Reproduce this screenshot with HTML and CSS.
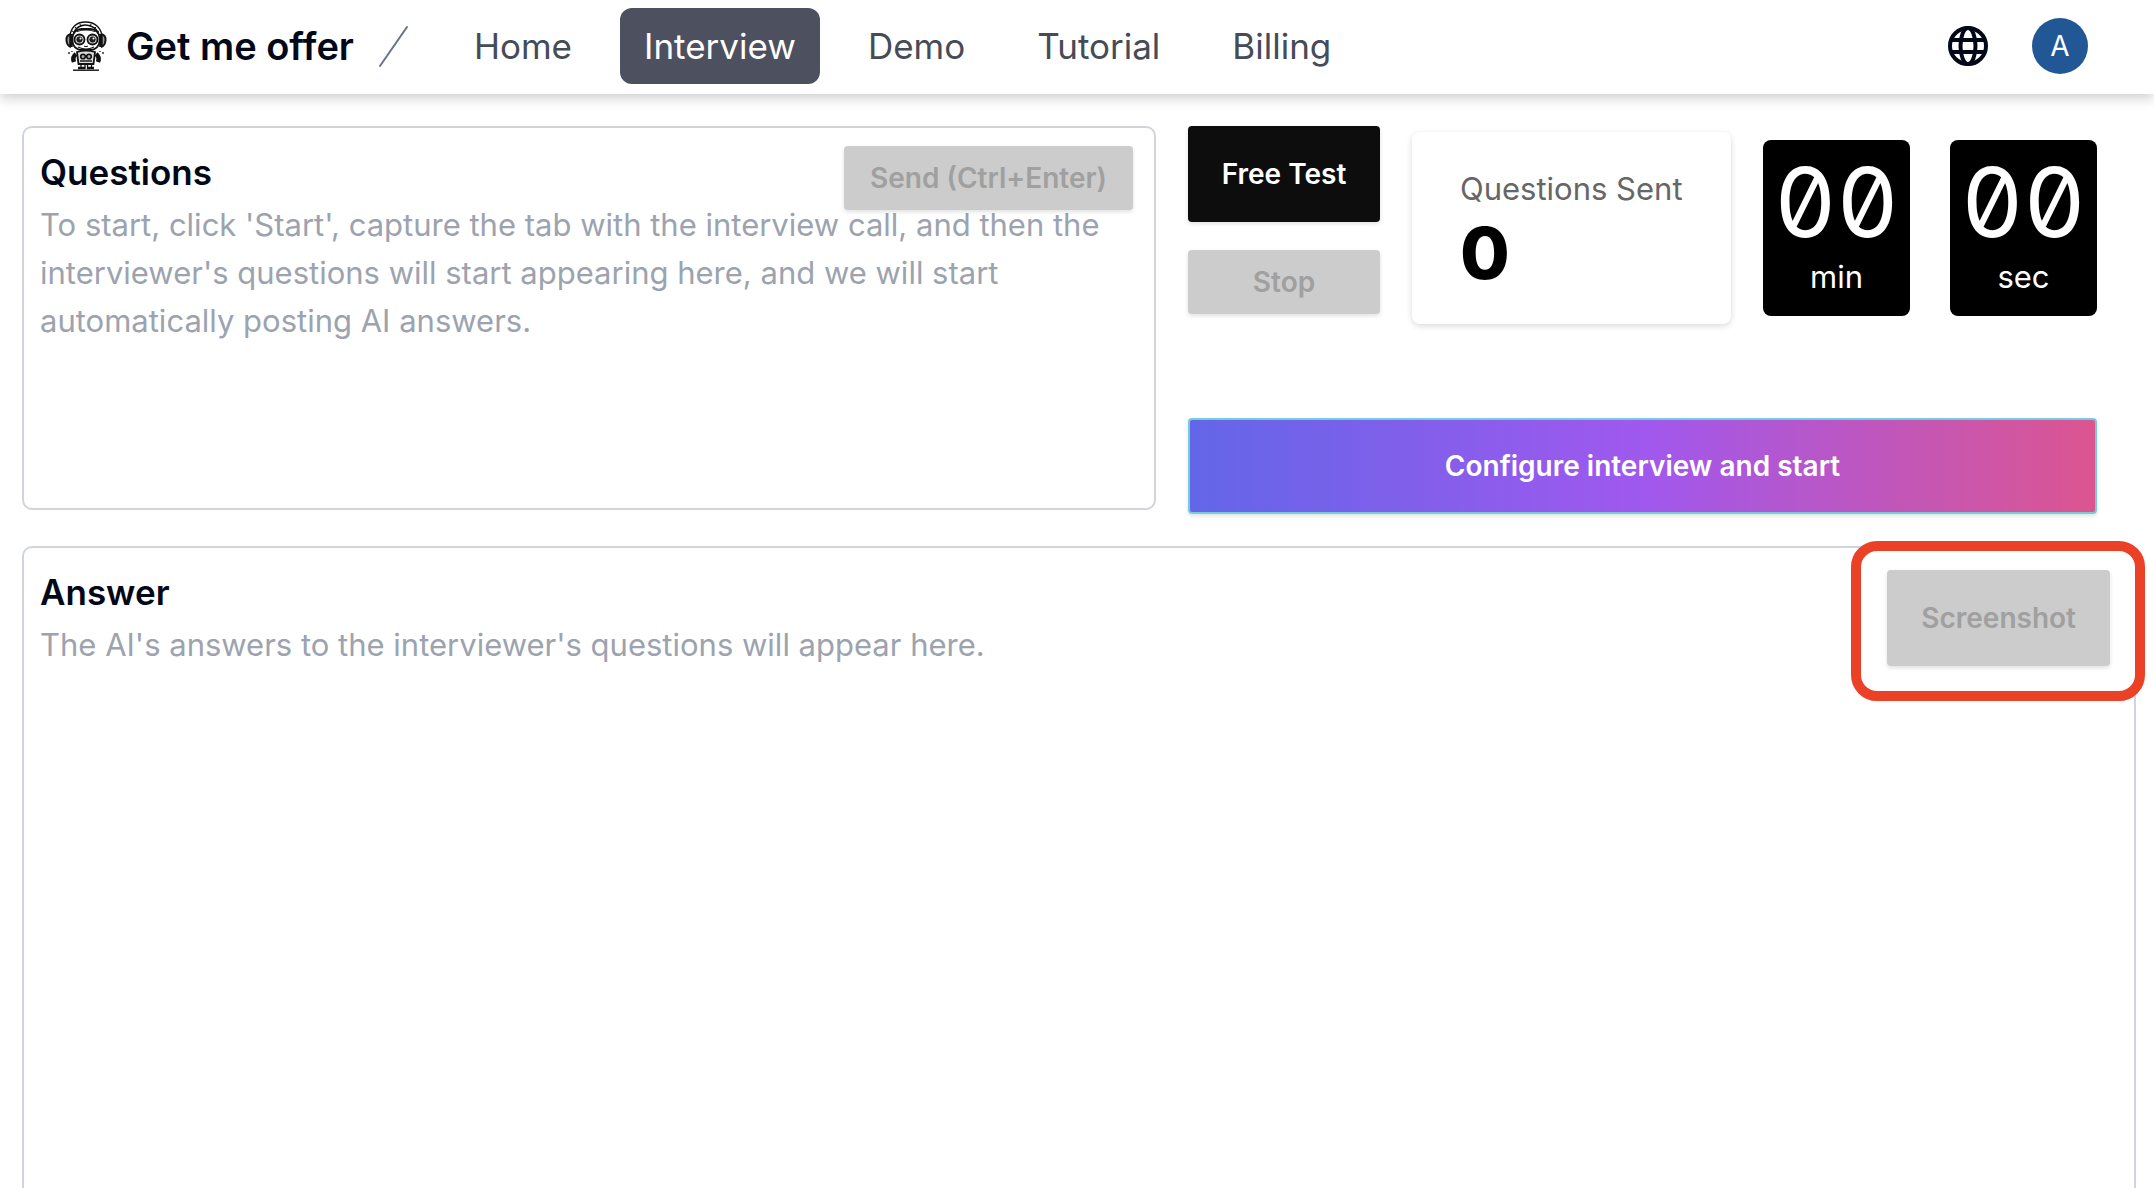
FILE: index.html
```html
<!DOCTYPE html>
<html lang="en">
<head>
<meta charset="utf-8">
<title>Get me offer</title>
<link rel="stylesheet" href="styles.css">
</head>
<body>
<header class="topbar">
  <a class="brand" href="#">
    <svg class="brand-logo" viewBox="0 0 42 50" fill="none" stroke="#111" aria-hidden="true">
      <path d="M5 17C5 7 11 1 20.500 1S37 7 37 17M8 15C9 8 14 4 20.500 4S33 8 34 15" stroke-width="1.400"/>
      <path d="M7 10l3 2M10 6l3 3M15 3l1 3M34 10l-3 2M31 6l-3 3M26 3l-1 3" stroke-width="1"/>
      <rect x="7.500" y="8" width="27" height="21" rx="9" fill="#fff" stroke-width="1.800"/>
      <path d="M12 10.500Q21 7.500 30 10.500M13 26Q21 30 29 26" stroke-width="1.200"/>
      <path d="M6 13Q1 14 1.500 19.500T6 26M36 13Q41 14 40.500 19.500T36 26" fill="#999" stroke-width="2"/>
      <path d="M6 13v13M36 13v13" stroke-width="3.500"/>
      <circle cx="14.500" cy="18.500" r="5" fill="#ccc" stroke-width="1.800"/>
      <circle cx="27.500" cy="18.500" r="5" fill="#ccc" stroke-width="1.800"/>
      <circle cx="14.500" cy="18.500" r="2.600" fill="#222"/>
      <circle cx="27.500" cy="18.500" r="2.600" fill="#222"/>
      <circle cx="15.500" cy="17.500" r="1" fill="#fff" stroke="none"/>
      <circle cx="28.500" cy="17.500" r="1" fill="#fff" stroke="none"/>
      <path d="M19 25q2 1.500 4 0" stroke-width="1"/>
      <path d="M12 31Q21 28 30 31L28.500 43h-15z" fill="#ddd" stroke-width="1.800"/>
      <circle cx="18" cy="35.500" r="2.300" fill="#aaa" stroke-width="1.600"/>
      <circle cx="24" cy="35.500" r="2.300" fill="#aaa" stroke-width="1.600"/>
      <path d="M15 40h12" stroke-width="1.400"/>
      <path d="M11 33Q7 36 9 41M31 33Q35 36 33 41" stroke-width="4.500"/>
      <path d="M16 43v5M20 43v5M22.500 43v5M26.500 43v5M4 31v2M38 31v2M7 30v1M35 30v1" stroke-width="1.300"/>
      <path d="M13 47h7M22 47h7" stroke-width="2.500"/>
      <path d="M8 49.200h26" stroke-width="1.400"/>
    </svg>
    <span>Get me offer</span>
  </a>
  <svg class="slash" viewBox="0 0 32 44" aria-hidden="true"><path d="M2 42L29 3" stroke="#64748b" stroke-width="2" stroke-linecap="round"/></svg>
  <nav class="nav">
    <a href="#">Home</a>
    <a href="#" class="active" aria-current="page">Interview</a>
    <a href="#">Demo</a>
    <a href="#">Tutorial</a>
    <a href="#">Billing</a>
  </nav>
  <button class="icon-button" type="button" aria-label="Language">
    <svg viewBox="0 0 40 40" fill="none" stroke="#020817" stroke-width="4" aria-hidden="true">
      <circle cx="20" cy="20" r="18"/>
      <ellipse cx="20" cy="20" rx="7.500" ry="18"/>
      <path d="M3 14h34M3 26h34"/>
    </svg>
  </button>
  <button class="avatar" type="button" aria-label="Account">A</button>
</header>
<main class="page">
  <div class="upper">
    <section class="panel questions">
      <h2>Questions</h2>
      <p>To start, click 'Start', capture the tab with the interview call, and then the interviewer's questions will start appearing here, and we will start automatically posting AI answers.</p>
      <button class="btn send" type="button" disabled>Send (Ctrl+Enter)</button>
    </section>
    <section class="controls">
      <div class="status">
        <div class="actions">
          <button class="btn tall dark" type="button">Free Test</button>
          <button class="btn" type="button" disabled>Stop</button>
        </div>
        <div class="stat">
          <span class="stat-title">Questions Sent</span>
          <span class="stat-value">0</span>
        </div>
        <div class="timer">
          <div class="unit"><span class="digits">00</span><span>min</span></div>
          <div class="unit"><span class="digits">00</span><span>sec</span></div>
        </div>
      </div>
      <button class="btn tall configure" type="button">Configure interview and start</button>
    </section>
  </div>
  <section class="panel answer">
    <div>
      <h2>Answer</h2>
      <p>The AI's answers to the interviewer's questions will appear here.</p>
    </div>
    <div class="highlight">
      <button class="btn tall" type="button" disabled>Screenshot</button>
    </div>
  </section>
</main>
</body>
</html>
```
FILE: styles.css
```css
* { box-sizing: border-box; }

body {
  margin: 0;
  height: 100vh;
  overflow: hidden;
  display: flex;
  flex-direction: column;
  background: #fff;
  color: #020817;
  font-family: Inter, "Liberation Sans", sans-serif;
  font-size: 31px;
  line-height: 48px;
}

button { font-family: inherit; border: 0; cursor: pointer; }
a { color: inherit; text-decoration: none; }
h2, p { margin: 0; }

.topbar {
  flex: none;
  height: 94px;
  padding: 0 66px 2px 64px;
  display: flex;
  align-items: center;
  box-shadow: 0 4px 12px rgba(0, 0, 0, .2);
}

.brand {
  display: flex;
  align-items: center;
  gap: 18px;
  font-size: 38px;
  font-weight: 600;
}

.brand-logo { width: 44px; height: 50px; }
.slash { width: 32px; height: 44px; margin: 0 40px 0 24px; }

.nav { display: flex; gap: 24px; margin-right: auto; }
.nav a {
  padding: 14px 24px;
  border-radius: 12px;
  color: #454b57;
  font-size: 35px;
}
.nav .active { background: #4d505f; color: #fff; }

.icon-button { width: 40px; height: 40px; padding: 0; margin-right: 44px; background: none; }
.icon-button svg { display: block; }

.avatar {
  width: 56px;
  height: 56px;
  padding: 0;
  border-radius: 50%;
  background: #225796;
  color: #fff;
  font-size: 28px;
}

.page {
  flex: 1;
  padding: 32px 18px 0 22px;
  display: flex;
  flex-direction: column;
  gap: 32px;
}

.upper { display: grid; grid-template-columns: 1134fr 909fr; gap: 32px; padding-right: 39px; }

.panel { padding: 16px; border: 2px solid #d1d5db; border-radius: 10px; }
.panel h2 { margin-bottom: 1px; font-size: 35px; font-weight: 600; line-height: 56px; }
.panel p { color: #9ca3af; }

.questions { position: relative; height: 384px; }
.send { position: absolute; top: 18px; right: 21px; }

.btn {
  height: 64px;
  padding: 0 26px;
  border-radius: 4px;
  background: #0d0d0d;
  color: #fff;
  font-size: 28px;
  font-weight: 600;
  white-space: nowrap;
  box-shadow: 0 2px 4px rgba(0, 0, 0, .12);
}
.btn:disabled { background: #ccc; color: #a0a0a0; cursor: default; }
.tall { height: 96px; padding: 0 34px; }

.controls { display: flex; flex-direction: column; justify-content: space-between; height: 388px; }
.status { display: flex; }
.actions { width: 192px; display: flex; flex-direction: column; gap: 28px; }
.actions .btn { padding: 0; }

.stat {
  width: 319px;
  height: 192px;
  margin: 6px 0 0 32px;
  padding: 33px 48px;
  border-radius: 8px;
  display: flex;
  flex-direction: column;
  box-shadow: 0 2px 6px rgba(0, 0, 0, .15);
}
.stat-title { color: #666; white-space: nowrap; }
.stat-value { color: #000; font-size: 72px; font-weight: 800; line-height: 80px; }

.timer { margin: 14px 0 0 auto; display: flex; gap: 40px; }
.unit {
  width: 147px;
  height: 176px;
  padding-top: 11px;
  border-radius: 8px;
  background: #000;
  color: #fff;
  display: flex;
  flex-direction: column;
  align-items: center;
}
.digits { font-size: 96px; line-height: 102px; font-variant-numeric: tabular-nums slashed-zero; }

.configure {
  border: 2px solid #76ccd8;
  background: linear-gradient(90deg, #6366e8, #a058ee 50%, #dc5590);
}

.answer { flex: 1; display: flex; justify-content: space-between; border-bottom: 0; border-radius: 10px 10px 0 0; }

/* Red frame that marks the button and overlaps the panel's corner. */
.highlight {
  align-self: flex-start;
  margin: -23px -27px 0 0;
  padding: 19px 25px 25px 26px;
  border: 10px solid #eb4126;
  border-radius: 26px;
  background: #fff;
}
.highlight .btn { display: block; }
```
